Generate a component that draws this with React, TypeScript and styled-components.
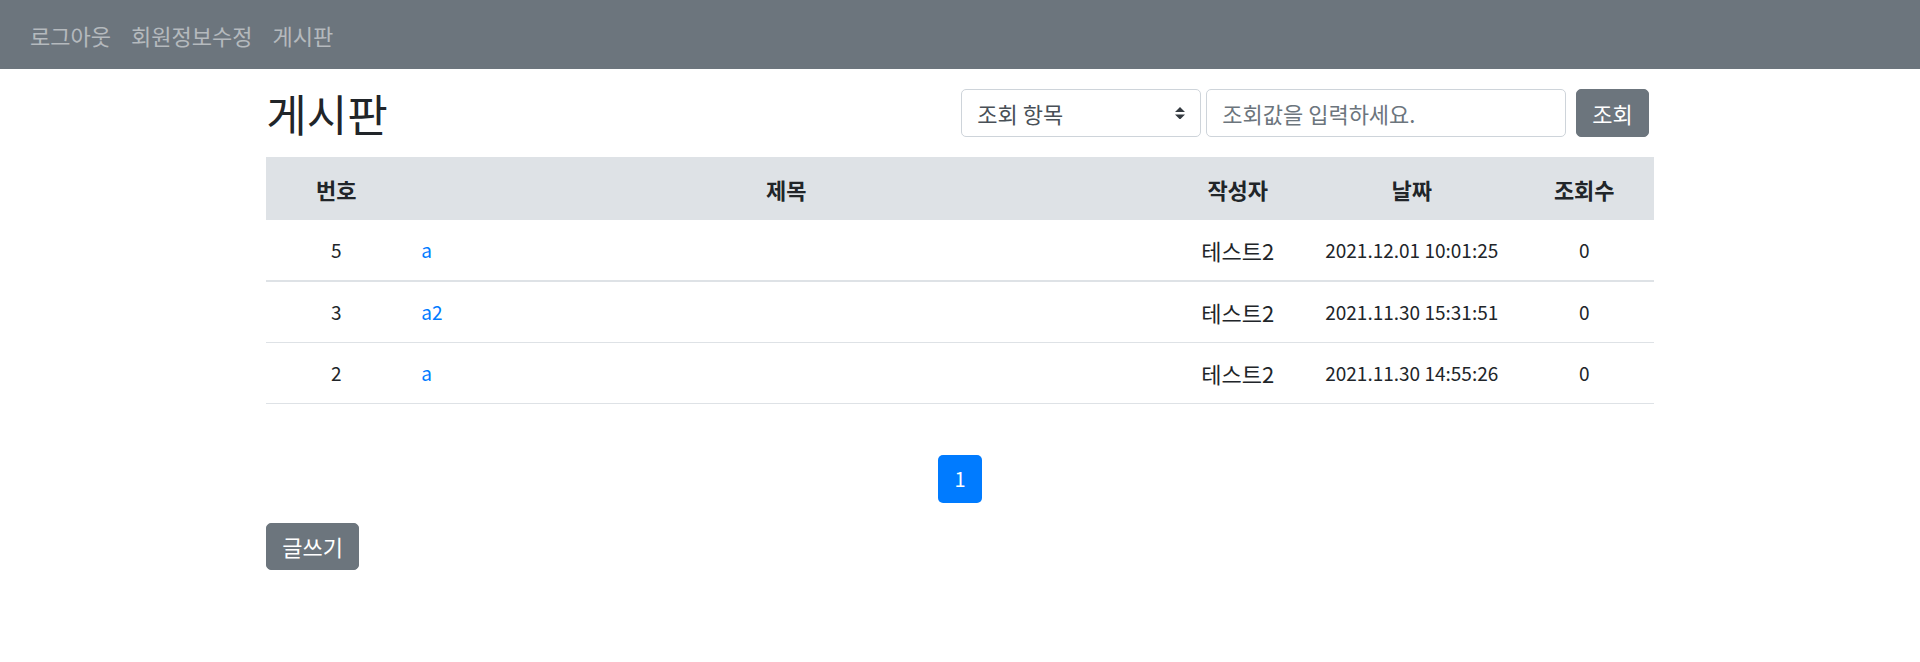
import styled, { createGlobalStyle } from "styled-components";

const GlobalStyle = createGlobalStyle`
    * {
        box-sizing: border-box;
    }
    body {
        margin: 0;
        background: #fff;
        color: #212529;
        font-family: "Noto Sans CJK KR", "Noto Sans", sans-serif;
        font-size: 22px;
        line-height: 30px;
    }
`

const Navbar = styled.nav`
    height: 69px;
    background: #6c757d;
    padding: 10px 20px;
    display: flex;
    align-items: center;
`

const NavLink = styled.a`
    display: block;
    padding: 10px;
    line-height: 30px;
    color: rgba(255, 255, 255, 0.5);
    text-decoration: none;
    cursor: pointer;
`

const Container = styled.div`
    max-width: 1425px;
    margin: 0 auto;
    padding: 20px 18.75px 0;
`

const TopRow = styled.div`
    display: flex;
    align-items: center;
    justify-content: space-between;
    margin-bottom: 20px;
`

const Title = styled.h2`
    margin: 0;
    font-size: 44px;
    font-weight: 400;
    line-height: 48px;
`

const SearchForm = styled.form`
    display: flex;
    gap: 5px;
    margin-right: 5px;
`

const Select = styled.div`
    width: 240px;
    height: 47.5px;
    border: 1.25px solid #ced4da;
    border-radius: 5px;
    padding: 0 15px;
    display: flex;
    align-items: center;
    justify-content: space-between;
    color: #495057;
`

const Input = styled.input`
    width: 360px;
    height: 47.5px;
    border: 1.25px solid #ced4da;
    border-radius: 5px;
    padding: 0 15px;
    font: inherit;
    color: #495057;

    &::placeholder {
        color: #6c757d;
    }
`

const Button = styled.button`
    height: 47.5px;
    padding: 0 15px;
    border: 1.25px solid #6c757d;
    border-radius: 5px;
    background: #6c757d;
    color: #fff;
    font: inherit;
    line-height: 30px;
    margin-left: 5px;
`

const Table = styled.table`
    width: 100%;
    border-collapse: collapse;
    table-layout: fixed;
`

const HeadCell = styled.th<{ $width: number }>`
    width: ${p => p.$width}px;
    background: #dee2e6;
    padding: 15px;
    height: 63px;
    line-height: 30px;
    font-weight: 700;
    text-align: center;
`

const Row = styled.tr<{ $thick?: boolean }>`
    border-bottom: ${p => p.$thick ? "2.5px" : "1.25px"} solid #dee2e6;
`

const Cell = styled.td<{ $left?: boolean; $num?: boolean }>`
    padding: 15px;
    height: 60px;
    line-height: 30px;
    white-space: nowrap;
    font-size: ${p => p.$num ? "19px" : "22px"};
    text-align: ${p => p.$left ? "left" : "center"};
`

const TitleLink = styled.a`
    color: #007bff;
    text-decoration: none;
    cursor: pointer;
`

const Pagination = styled.ul`
    list-style: none;
    display: flex;
    justify-content: center;
    margin: 51px 0 20px;
    padding: 0;
`

const PageLink = styled.li`
    width: 44px;
    height: 47.5px;
    border-radius: 5px;
    background: #007bff;
    color: #fff;
    font-size: 20px;
    display: flex;
    align-items: center;
    justify-content: center;
    line-height: 25px;
`

const WriteButton = styled(Button)`
    margin-left: 0;
`

const SelectArrow = () => (
    <svg width="10" height="12.5" viewBox="0 0 4 5">
        <path fill="#343a40" d="M2 0L0 2h4zm0 5L0 3h4z" />
    </svg>
)

const posts = [
    { no: 5, title: "a", writer: "테스트2", date: "2021.12.01 10:01:25", views: 0 },
    { no: 3, title: "a2", writer: "테스트2", date: "2021.11.30 15:31:51", views: 0 },
    { no: 2, title: "a", writer: "테스트2", date: "2021.11.30 14:55:26", views: 0 },
]

export default function App() {
    return (
        <>
            <GlobalStyle />
            <Navbar>
                <NavLink>로그아웃</NavLink>
                <NavLink>회원정보수정</NavLink>
                <NavLink>게시판</NavLink>
            </Navbar>

            <Container>
                <TopRow>
                    <Title>게시판</Title>
                    <SearchForm onSubmit={e => e.preventDefault()}>
                        <Select>
                            <span>조회 항목</span>
                            <SelectArrow />
                        </Select>
                        <Input placeholder="조회값을 입력하세요." />
                        <Button type="submit">조회</Button>
                    </SearchForm>
                </TopRow>

                <Table>
                    <thead>
                        <tr>
                            <HeadCell $width={140}>번호</HeadCell>
                            <HeadCell $width={760}>제목</HeadCell>
                            <HeadCell $width={143}>작성자</HeadCell>
                            <HeadCell $width={205}>날짜</HeadCell>
                            <HeadCell $width={140}>조회수</HeadCell>
                        </tr>
                    </thead>
                    <tbody>
                        {posts.map((post, i) => (
                            <Row key={post.no} $thick={i === 0}>
                                <Cell $num>{post.no}</Cell>
                                <Cell $num $left><TitleLink>{post.title}</TitleLink></Cell>
                                <Cell>{post.writer}</Cell>
                                <Cell $num>{post.date}</Cell>
                                <Cell $num>{post.views}</Cell>
                            </Row>
                        ))}
                    </tbody>
                </Table>

                <Pagination>
                    <PageLink>1</PageLink>
                </Pagination>

                <WriteButton>글쓰기</WriteButton>
            </Container>
        </>
    )
}
